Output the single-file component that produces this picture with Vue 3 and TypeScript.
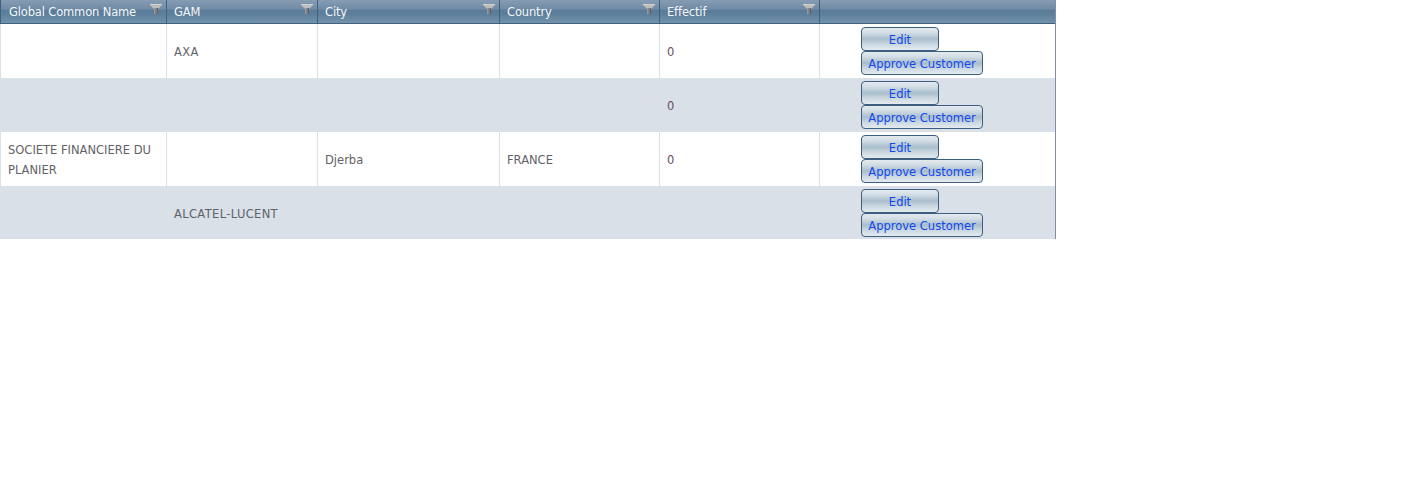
<script setup lang="ts">
interface Row { name: string; gam: string; city: string; country: string; effectif: string }
const headers = ['Global Common Name', 'GAM', 'City', 'Country', 'Effectif']
const rows: Row[] = [
  { name: '', gam: 'AXA', city: '', country: '', effectif: '0' },
  { name: '', gam: '', city: '', country: '', effectif: '0' },
  { name: 'SOCIETE FINANCIERE DU PLANIER', gam: '', city: 'Djerba', country: 'FRANCE', effectif: '0' },
  { name: '', gam: 'ALCATEL-LUCENT', city: '', country: '', effectif: '' },
]
</script>

<template>
  <div class="grid">
    <table>
      <colgroup>
        <col class="c1" /><col class="c2" /><col class="c3" /><col class="c4" /><col class="c5" /><col class="c6" />
      </colgroup>
      <thead>
        <tr>
          <th v-for="h in headers" :key="h">
            {{ h }}
            <svg class="filter" width="12" height="10" viewBox="0 0 12 10">
              <path d="M0 0 H12 V1 L8 5 H4 L0 1 Z" fill="#bdbdbd" />
              <path d="M0 0 H12 V1 H0 Z" fill="#d2d2d2" />
              <rect x="4" y="4" width="1.5" height="6" fill="#9a9a9a" />
              <rect x="5.5" y="4" width="1.5" height="6" fill="#7e7e7e" />
              <rect x="7" y="4" width="1" height="6" fill="#606060" />
            </svg>
          </th>
          <th></th>
        </tr>
      </thead>
      <tbody>
        <tr v-for="(r, i) in rows" :key="i" :class="{ alt: i % 2 === 1 }">
          <td>{{ r.name }}</td>
          <td class="gam">{{ r.gam }}</td>
          <td>{{ r.city }}</td>
          <td>{{ r.country }}</td>
          <td class="num">{{ r.effectif }}</td>
          <td class="actions">
            <button class="btn edit" type="button">Edit</button>
            <button class="btn" type="button">Approve Customer</button>
          </td>
        </tr>
      </tbody>
    </table>
  </div>
</template>

<style scoped>
.grid {
  width: 1056px;
  font-family: "DejaVu Sans", Verdana, sans-serif;
  font-size: 11.5px;
}
table {
  width: 1056px;
  table-layout: fixed;
  border-collapse: separate;
  border-spacing: 0;
  border-right: 1px solid #7f8ea3;
}
.c1 { width: 167px; }
.c2 { width: 151px; }
.c3 { width: 182px; }
.c4 { width: 160px; }
.c5 { width: 160px; }
th {
  position: relative;
  height: 24px;
  padding: 0 7px;
  box-sizing: border-box;
  text-align: left;
  font-weight: 400;
  letter-spacing: -0.15px;
  color: #f4f7fa;
  white-space: nowrap;
  border-bottom: 1px solid #3f617f;
  border-right: 1px solid #3f617f;
  background: linear-gradient(#879cb3 0, #708ba6 40%, #5a7c98 44%, #5c7e9a 60%, #7492ab 100%);
}
th:first-child { border-left: 1px solid #3f617f; padding-left: 8px; }
th:last-child { border-right: 0; }
.filter {
  position: absolute;
  top: 4px;
  right: 4px;
}
td {
  height: 54px;
  padding: 2px 7px 0;
  box-sizing: border-box;
  color: #5f6268;
  line-height: 20px;
  border-right: 1px solid #d9e0e7;
  background: #fff;
  vertical-align: middle;
}
td:first-child { border-left: 1px solid #d9e0e7; }
td:last-child { border-right: 0; }
.alt td {
  background: #d9e0e7;
  border-color: #d9e0e7;
}
tbody tr:last-child td { height: 53px; }
.gam { letter-spacing: 0.35px; }
.num { color: #6b4a63; }
td.actions {
  padding: 0 0 0 41px;
  font-size: 0;
  line-height: 0;
}
.btn {
  display: block;
  width: 122px;
  height: 24px;
  padding: 2px 0 0;
  box-sizing: border-box;
  border: 1px solid #3c5f7f;
  border-radius: 4px;
  font: 11.5px/20px "DejaVu Sans", Verdana, sans-serif;
  color: #1048ee;
  text-align: center;
  background: linear-gradient(#e4eaef 0, #d2dde5 22%, #a9bdcc 50%, #c9d6df 72%, #e4ebf0 100%);
}
.edit { width: 78px; }
</style>

<style>
body { background: #fff; }
</style>
